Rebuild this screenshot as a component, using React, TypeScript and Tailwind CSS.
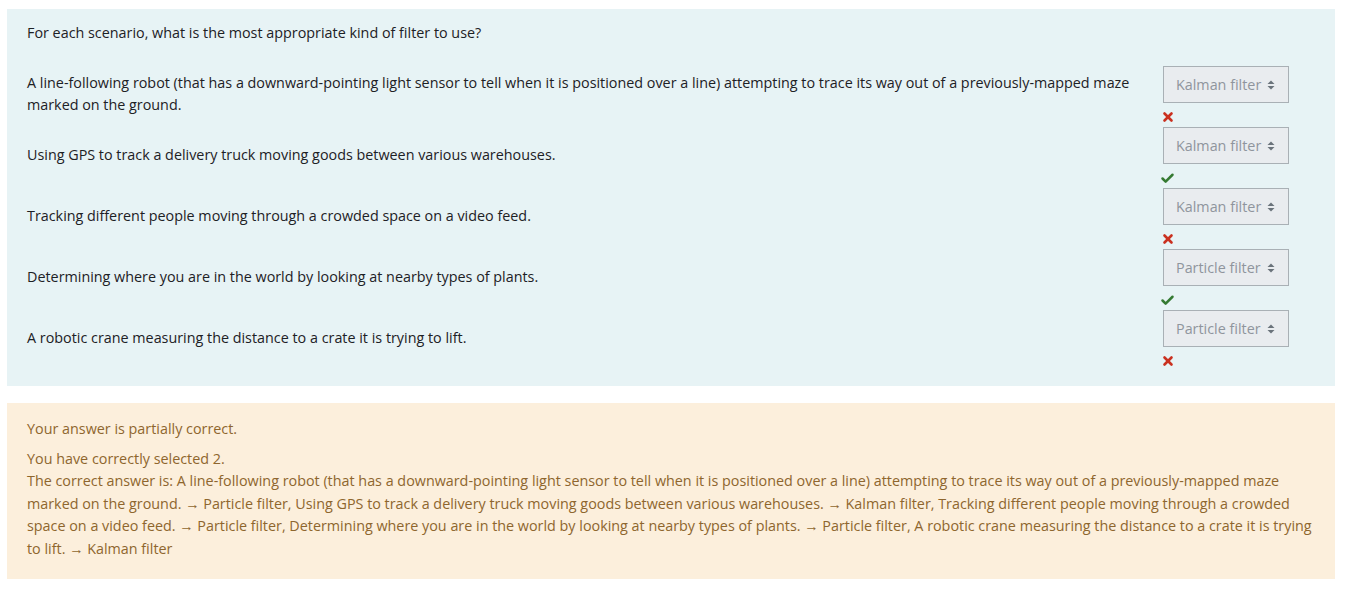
import { X, Check } from 'lucide-react';

const rows = [
  {
    text: 'A line-following robot (that has a downward-pointing light sensor to tell when it is positioned over a line) attempting to trace its way out of a previously-mapped maze marked on the ground.',
    choice: 'Kalman filter',
    ok: false,
  },
  { text: 'Using GPS to track a delivery truck moving goods between various warehouses.', choice: 'Kalman filter', ok: true },
  { text: 'Tracking different people moving through a crowded space on a video feed.', choice: 'Kalman filter', ok: false },
  { text: 'Determining where you are in the world by looking at nearby types of plants.', choice: 'Particle filter', ok: true },
  { text: 'A robotic crane measuring the distance to a crate it is trying to lift.', choice: 'Particle filter', ok: false },
];

function Caret() {
  return (
    <svg width="8" height="10" viewBox="0 0 8 10" className="text-[#6a737b]">
      <path d="M4 0.5 L7.5 4 H0.5 Z" fill="currentColor" />
      <path d="M4 9.5 L7.5 6 H0.5 Z" fill="currentColor" />
    </svg>
  );
}

export default function App() {
  return (
    <div
      className="w-[1347px] min-h-[597px] bg-white pt-[9px] pl-[7px] pr-[12px] text-[14.35px]"
      style={{ fontFamily: '"Open Sans", "Noto Sans", sans-serif' }}
    >
      {/* Formulation */}
      <div className="bg-[#e7f3f5] text-[#1d2125] pt-[13px] pb-[15px] px-[20px]">
        <p className="leading-[22px] mb-[22px]">For each scenario, what is the most appropriate kind of filter to use?</p>
        <div className="flex flex-col">
          {rows.map((r, i) => (
            <div key={i} className="flex items-center">
              <div className="flex-1 pr-[24px] pb-[6px] leading-[22px]">{r.text}</div>
              <div className="w-[152px] flex flex-col">
                <div className="w-[126px] h-[37px] border border-[#a9b0b5] bg-[#e9ecef] flex items-center justify-between pl-[12px] pr-[13px] text-[#8f959d]">
                  <span>{r.choice}</span>
                  <Caret />
                </div>
                <div className="h-[24px] pt-[4px] flex items-center">
                  {r.ok ? (
                    <Check size={15} strokeWidth={4} className="text-[#357a32] -ml-[3px]" />
                  ) : (
                    <X size={14} strokeWidth={4.5} className="text-[#ca3120] -ml-[2px]" />
                  )}
                </div>
              </div>
            </div>
          ))}
        </div>
      </div>

      {/* Feedback */}
      <div className="mt-[17px] bg-[#fcefdc] text-[#8e662e] px-[20px] pt-[15px] pb-[19px] leading-[22.5px]">
        <p className="mb-[7px]">Your answer is partially correct.</p>
        <p>You have correctly selected 2.</p>
        <p>
          The correct answer is: A line-following robot (that has a downward-pointing light sensor to tell when it is positioned over a line) attempting to trace its way out of a previously-mapped maze marked on the ground. → Particle filter, Using GPS to track a delivery truck moving goods between various warehouses. → Kalman filter, Tracking different people moving through a crowded space on a video feed. → Particle filter, Determining where you are in the world by looking at nearby types of plants. → Particle filter, A robotic crane measuring the distance to a crate it is trying to lift. → Kalman filter
        </p>
      </div>
    </div>
  );
}
